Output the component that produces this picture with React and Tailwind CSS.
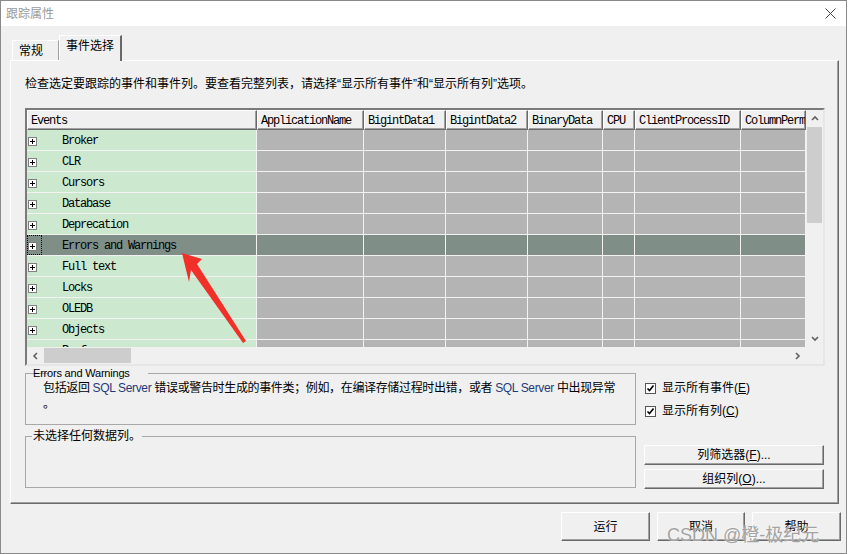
const cols = [
  { name: 'ApplicationName', w: 'w-[107px]' },
  { name: 'BigintData1', w: 'w-[82px]' },
  { name: 'BigintData2', w: 'w-[82px]' },
  { name: 'BinaryData', w: 'w-[75px]' },
  { name: 'CPU', w: 'w-[32px]' },
  { name: 'ClientProcessID', w: 'w-[106px]' },
  { name: 'ColumnPermissions', w: 'w-[65px]' },
];

const events = [
  'Broker', 'CLR', 'Cursors', 'Database', 'Deprecation', 'Errors and Warnings',
  'Full text', 'Locks', 'OLEDB', 'Objects', 'Performance',
];

const raised = 'border border-t-white border-l-white border-r-[#696969] border-b-[#696969] shadow-[inset_-1px_-1px_0_#a0a0a0]';

export default function App() {
  return (
    <div className="relative w-[849px] h-[554px] bg-white font-['Liberation_Sans','Noto_Sans_CJK_SC',sans-serif] text-[12px] text-black">
      <div className="w-[847px] h-[554px] border border-[#8a8a8a] bg-[#f0f0f0] flex flex-col">
        <TitleBar />
        <div className="pl-[9px] pt-[9px]">
          <Tabs />
          <div className={`w-[829px] h-[444px] px-[14px] pt-[15px] ${raised}`}>
            <p className="leading-[16px] whitespace-nowrap">
              检查选定要跟踪的事件和事件列。要查看完整列表，请选择“显示所有事件”和“显示所有列”选项。
            </p>
            <EventGrid />
            <LowerArea />
          </div>
        </div>
        <div className="flex justify-end gap-[7px] pr-[5px] mt-[8px]">
          <Btn w="w-[89px]">运行</Btn>
          <Btn w="w-[88px]">取消</Btn>
          <Btn w="w-[89px]">帮助</Btn>
        </div>
      </div>

      {/* red annotation arrow */}
      <svg className="absolute left-0 top-0 pointer-events-none" width="849" height="554">
        <polygon points="182,253 202,259 197,264 246,341 243,343 191,270 189,282" fill="#f2302a" />
      </svg>

      {/* watermark */}
      <div className="absolute left-[667px] top-[524px] text-[18px] leading-[22px] text-[#a3a3a3] [text-shadow:0_0_2px_#fff] whitespace-nowrap">
        CSDN @橙-极纪元
      </div>
    </div>
  );
}

function TitleBar() {
  return (
    <div className="h-[25px] bg-white flex items-center justify-between pl-[5px] pr-[10px]">
      <span className="text-[#9a9a9a] text-[12px] leading-none pt-[1px]">跟踪属性</span>
      <svg width="11" height="11" viewBox="0 0 11 11" stroke="#444" strokeWidth="1">
        <path d="M0.5 0.5l10 10M10.5 0.5l-10 10" />
      </svg>
    </div>
  );
}

function Tabs() {
  return (
    <div className="relative z-10 flex items-end h-[26px] -mb-[1px] pl-[2px]">
      <div className="w-[47px] h-[20px] mb-[1px] border-t border-l border-white border-r border-r-[#a0a0a0] flex items-center pl-[6px] leading-none">
        常规
      </div>
      <div className="w-[63px] h-[26px] bg-[#f0f0f0] border-t border-l border-white border-r-2 border-r-[#696969] flex items-center pl-[6px] pb-[5px] leading-none">
        事件选择
      </div>
    </div>
  );
}

function Chevron({ dir }) {
  const d = {
    up: 'M1 5l3-3 3 3',
    down: 'M1 2l3 3 3-3',
    left: 'M5 1l-3 3 3 3',
    right: 'M2 1l3 3-3 3',
  }[dir];
  return (
    <svg width="8" height="8" viewBox="0 0 8 8" fill="none" stroke="#606060" strokeWidth="1.6">
      <path d={d} />
    </svg>
  );
}

function PlusBox({ focus }) {
  return (
    <div className={`w-[15px] self-stretch flex items-center border border-dotted ${focus ? 'border-black' : 'border-transparent'}`}>
      <div className="w-[9px] h-[9px] translate-y-[1px] bg-white border border-[#808080] flex items-center justify-center">
        <svg width="5" height="5" viewBox="0 0 5 5" stroke="#000" strokeWidth="1">
          <path d="M0 2.5h5M2.5 0v5" />
        </svg>
      </div>
    </div>
  );
}

function EventGrid() {
  return (
    <div className="mt-[16px] w-[800px] border-2 border-t-[#7a7a7a] border-l-[#7a7a7a] border-r-[#e6e6e6] border-b-[#e6e6e6] font-['Liberation_Mono',monospace] text-[12px] tracking-[-1.2px]">
      <div className="flex">
        <div className="w-[779px]">
          <div className="flex h-[20px]">
            <div className={`w-[230px] bg-[#f0f0f0] flex items-center pl-[3px] pt-[2px] ${raised}`}>Events</div>
            {cols.map(c => (
              <div key={c.name} className={`${c.w} bg-[#f0f0f0] flex items-center pl-[3px] pt-[2px] overflow-hidden whitespace-nowrap ${raised}`}>
                {c.name}
              </div>
            ))}
          </div>
          <div className="h-[217px] overflow-hidden">
            {events.map(ev => {
              const sel = ev === 'Errors and Warnings';
              return (
                <div key={ev} className="flex h-[21px] border-b border-[#f2f2f2]">
                  <div className={`w-[230px] flex items-center border-r border-[#f2f2f2] whitespace-nowrap ${sel ? 'bg-[#7f8f87]' : 'bg-[#cce8cf]'}`}>
                    <PlusBox focus={sel} />
                    <span className="ml-[20px] translate-y-[1px]">{ev}</span>
                  </div>
                  {cols.map(c => (
                    <div key={c.name} className={`${c.w} border-r border-[#f2f2f2] ${sel ? 'bg-[#7f8f87]' : 'bg-[#b4b4b4]'}`} />
                  ))}
                </div>
              );
            })}
          </div>
        </div>
        <div className="w-[17px] h-[237px] bg-[#f0f0f0] flex flex-col">
          <div className="h-[17px] flex items-center justify-center"><Chevron dir="up" /></div>
          <div className="h-[96px] mx-[1px] bg-[#cdcdcd]" />
          <div className="flex-1" />
          <div className="h-[17px] flex items-center justify-center"><Chevron dir="down" /></div>
        </div>
      </div>
      <div className="flex h-[17px] bg-[#f0f0f0]">
        <div className="w-[17px] flex items-center justify-center"><Chevron dir="left" /></div>
        <div className="w-[87px] my-[1px] bg-[#cdcdcd]" />
        <div className="flex-1" />
        <div className="w-[17px] flex items-center justify-center"><Chevron dir="right" /></div>
        <div className="w-[17px]" />
      </div>
    </div>
  );
}

function Check({ children }) {
  return (
    <div className="flex items-center h-[16px] pl-[1px]">
      <div className="w-[11px] h-[11px] border border-[#555] bg-white flex items-center justify-center">
        <svg width="9" height="9" viewBox="0 0 9 9" fill="none" stroke="#000" strokeWidth="1.6">
          <path d="M1.5 4.5l2 2 4-5" />
        </svg>
      </div>
      <span className="ml-[6px] leading-none">{children}</span>
    </div>
  );
}

function LowerArea() {
  return (
    <div className="flex">
      <div className="w-[611px] flex flex-col">
        <fieldset className="mt-[1px] h-[58px] border border-[#a8a8a8] pl-[17px]">
          <legend className="ml-[6px] -translate-x-[17px] px-[1px] text-[11px] leading-[13px] tracking-[-0.2px]">Errors and Warnings</legend>
          <p className="leading-[16px] whitespace-nowrap tracking-[-0.35px]">
            包括返回 <span className="text-[#1f3a7a]">SQL Server</span> 错误或警告时生成的事件类；例如，在编译存储过程时出错，或者 <span className="text-[#1f3a7a]">SQL Server</span> 中出现异常
          </p>
          <p className="leading-[16px]">。</p>
        </fieldset>
        <fieldset className="mt-[3px] h-[60px] border border-[#a8a8a8]">
          <legend className="ml-[6px] px-[1px] leading-[16px]">未选择任何数据列。</legend>
        </fieldset>
      </div>
      <div className="ml-[8px] w-[180px] flex flex-col">
        <div className="mt-[14px]"><Check>显示所有事件(<u>E</u>)</Check></div>
        <div className="mt-[7px]"><Check>显示所有列(<u>C</u>)</Check></div>
        <button className={`mt-[26px] h-[20px] w-full bg-[#f0f0f0] leading-none ${raised}`}>列筛选器(<u>F</u>)...</button>
        <button className={`mt-[4px] h-[20px] w-full bg-[#f0f0f0] leading-none ${raised}`}>组织列(<u>O</u>)...</button>
      </div>
    </div>
  );
}

function Btn({ w, children }) {
  return (
    <button className={`${w} h-[29px] bg-[#f0f0f0] leading-none ${raised}`}>{children}</button>
  );
}
